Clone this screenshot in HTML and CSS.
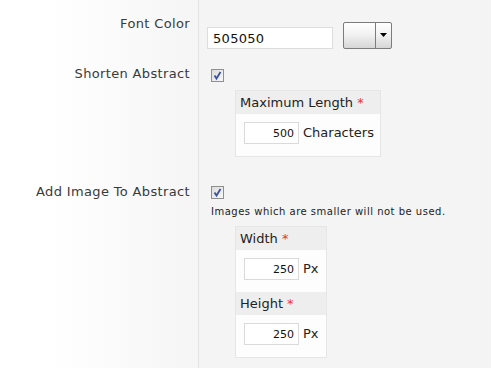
FILE: index.html
```html
<!DOCTYPE html>
<html lang="en">
<head>
  <meta charset="UTF-8">
  <meta name="viewport" content="width=device-width, initial-scale=1.0">
  <title>Abstract Settings</title>
  <link rel="stylesheet" href="styles.css">
</head>
<body>
  <div class="settings">
    <div class="row row-color">
      <div class="label">Font Color</div>
      <div class="field field-color">
        <input type="text" class="text-input" value="505050">
        <span class="color-picker">
          <span class="swatch"></span>
          <span class="drop">
            <svg width="7" height="4" viewBox="0 0 7 4"><path d="M0 0H7L3.5 4Z" fill="#000"/></svg>
          </span>
        </span>
      </div>
    </div>

    <div class="row row-shorten">
      <div class="label">Shorten Abstract</div>
      <div class="field">
        <span class="check">
          <svg width="11" height="11" viewBox="0 0 11 11"><path d="M2.5 5.5L4.5 8.5L8.5 2" fill="none" stroke="#3c51a3" stroke-width="1.8"/></svg>
        </span>
        <div class="subbox">
          <div class="subbox-head">Maximum Length <span class="req">*</span></div>
          <div class="subbox-body">
            <input type="text" class="num-input" value="500"> Characters
          </div>
        </div>
      </div>
    </div>

    <div class="row row-image">
      <div class="label">Add Image To Abstract</div>
      <div class="field">
        <span class="check">
          <svg width="11" height="11" viewBox="0 0 11 11"><path d="M2.5 5.5L4.5 8.5L8.5 2" fill="none" stroke="#3c51a3" stroke-width="1.8"/></svg>
        </span>
        <div class="note">Images which are smaller will not be used.</div>
        <div class="subbox subbox-size">
          <div class="subbox-head">Width <span class="req">*</span></div>
          <div class="subbox-body">
            <input type="text" class="num-input" value="250"> Px
          </div>
          <div class="subbox-head">Height <span class="req">*</span></div>
          <div class="subbox-body">
            <input type="text" class="num-input" value="250"> Px
          </div>
        </div>
      </div>
    </div>
  </div>
</body>
</html>
```

FILE: styles.css
```css
body {
  margin: 0;
  padding: 0;
  font-family: "DejaVu Sans", Verdana, sans-serif;
  font-size: 13px;
  line-height: 16px;
  color: #333333;
  background-color: #f4f4f4;
}

.settings {
  min-height: 100vh;
  background: linear-gradient(to right, #ffffff 50px, #f5f5f5 198px, #e3e3e3 198px, #e3e3e3 199px, #f4f4f4 199px);
}

.row {
  display: flex;
}

.label {
  flex: 0 0 199px;
  box-sizing: border-box;
  padding-right: 9px;
  text-align: right;
  letter-spacing: 0.35px;
  color: #3a3a3a;
}

.field {
  display: flex;
  flex-direction: column;
  align-items: flex-start;
  padding-left: 8px;
}

/* font color */
.row-color .label {
  padding-top: 16px;
}

.field-color {
  flex-direction: row;
  align-items: flex-end;
  padding-top: 22px;
}

.text-input {
  width: 126px;
  height: 22px;
  box-sizing: border-box;
  padding: 0 5px;
  border: 1px solid #dddddd;
  background: #ffffff;
  font-family: inherit;
  font-size: 13px;
  letter-spacing: 0.3px;
  color: #111111;
  outline: none;
}

.color-picker {
  display: flex;
  width: 49px;
  height: 27px;
  box-sizing: border-box;
  margin-left: 10px;
  border: 1px solid #7c7c7c;
  border-radius: 2px;
  background: linear-gradient(#ffffff, #f2f2f2 45%, #d6d6d6);
}

.swatch {
  flex: 0 0 31px;
  border-right: 1px solid #7c7c7c;
}

.drop {
  flex: 1;
  display: flex;
  align-items: center;
  justify-content: center;
  padding-bottom: 1px;
}

/* checkbox */
.check {
  display: flex;
  align-items: center;
  justify-content: center;
  width: 13px;
  height: 13px;
  box-sizing: border-box;
  margin-left: 4px;
  border: 1px solid #8f8f8f;
  background: linear-gradient(135deg, #dcdcdc, #f8f8f8);
}

.row-shorten .label {
  padding-top: 17px;
}

.row-shorten .check {
  margin-top: 20px;
}

.row-image .label {
  padding-top: 27px;
}

.row-image .check {
  margin-top: 29px;
}

.note {
  margin: 6px 0 0 4px;
  font-size: 10px;
  line-height: 13px;
  letter-spacing: 0.5px;
  color: #222222;
}

/* nested boxes */
.subbox {
  width: 146px;
  box-sizing: border-box;
  margin: 8px 0 0 28px;
  border: 1px solid #e6e6e6;
  background: #fdfdfd;
}

.subbox-size {
  width: 92px;
}

.subbox-head {
  height: 23px;
  padding-left: 4px;
  line-height: 23px;
  background: #eeeeee;
  color: #222222;
}

.req {
  color: #ee3333;
}

.subbox-body {
  display: flex;
  align-items: center;
  padding: 8px 0 12px 8px;
  color: #222222;
}

.num-input {
  width: 55px;
  height: 22px;
  box-sizing: border-box;
  margin-right: 4px;
  padding: 0 4px;
  border: 1px solid #dadada;
  background: #ffffff;
  font-family: inherit;
  font-size: 11px;
  color: #111111;
  text-align: right;
  outline: none;
}
```
